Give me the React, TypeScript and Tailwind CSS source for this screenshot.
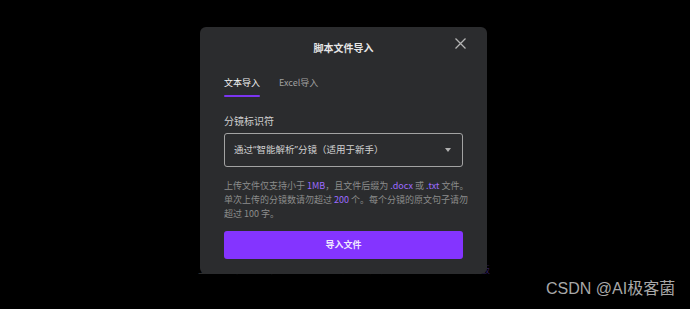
import React from "react";

const FONT = { fontFamily: '"Noto Sans CJK SC", "Noto Sans", sans-serif' };

function Hl({ children }: { children: React.ReactNode }) {
  return <span className="text-[#9d6bff]">{children}</span>;
}

// narrow latin quote so the select text keeps the reference width
function Q({ c }: { c: string }) {
  return <span style={{ fontFamily: '"Noto Sans", sans-serif' }}>{c}</span>;
}

export default function App() {
  return (
    <div className="relative h-[309px] w-[690px] overflow-hidden bg-black" style={FONT}>
      {/* page content behind the dimmed overlay */}
      <div className="ml-[198px] flex w-[292px] justify-between pt-[264px] text-[9px] leading-[12px] whitespace-nowrap">
        <span className="text-[#383838]">上传文件后系统将自动解析剧本内容并生成分镜。</span>
        <span className="text-[#33205e]">查看示例 下载模板</span>
      </div>

      {/* modal */}
      <div className="absolute left-[200px] top-[27px] h-[247px] w-[287px] rounded-[6px] bg-[#2b2c2e] px-[24px]">
        <div className="relative pt-[14px] text-center text-[10px] font-bold leading-[14px] text-[#e6e6e6]">
          脚本文件导入
          <svg className="absolute right-[-3px] top-[11px]" width="11" height="11" viewBox="0 0 11 11">
            <path d="M0.5 0.5L10.5 10.5M10.5 0.5L0.5 10.5" stroke="#b4b4b4" strokeWidth="1.3" />
          </svg>
        </div>

        <div className="mt-[21px] flex gap-[19px] text-[9px] leading-[14px]">
          <div className="flex flex-col">
            <span className="text-[#f2f2f2]">文本导入</span>
            <span className="mt-[5px] h-[2px] rounded-full bg-[#7b35f0]" />
          </div>
          <span className="text-[#a0a0a0]">Excel导入</span>
        </div>

        <div className="mt-[17px] text-[10px] leading-[14px] text-[#d0d0d0]">分镜标识符</div>

        <div className="mt-[5px] flex h-[34px] items-center justify-between rounded-[3px] border border-[#a3a3a3] pl-[9px] pr-[11px]">
          <span className="text-[9.5px] text-[#d2d2d2]">
            通过<Q c="“" />智能解析<Q c="”" />分镜（适用于新手）
          </span>
          <svg width="6" height="4" viewBox="0 0 6 4">
            <path d="M0 0H6L3 4Z" fill="#b0b0b0" />
          </svg>
        </div>

        <p className="mt-[12px] text-[9px] leading-[14px] whitespace-nowrap text-[#8c8c8c]">
          上传文件仅支持小于 <Hl>1MB</Hl>，且文件后缀为 <Hl>.docx</Hl> 或 <Hl>.txt</Hl> 文件。
          <br />
          单次上传的分镜数请勿超过 <Hl>200</Hl> 个。每个分镜的原文句子请勿
          <br />
          超过 100 字。
        </p>

        <button className="mt-[10px] flex h-[28px] w-full items-center justify-center rounded-[3px] bg-[#8434ff] text-[9px] font-bold text-[#f0e8ff]">
          导入文件
        </button>
      </div>

      {/* watermark */}
      <div
        className="absolute left-[546px] top-[279px] text-[16px] leading-[20px] text-[#a8a8a8]"
        style={{ fontFamily: '"Liberation Sans", "Noto Sans CJK SC", sans-serif' }}
      >
        CSDN @AI极客菌
      </div>
    </div>
  );
}
